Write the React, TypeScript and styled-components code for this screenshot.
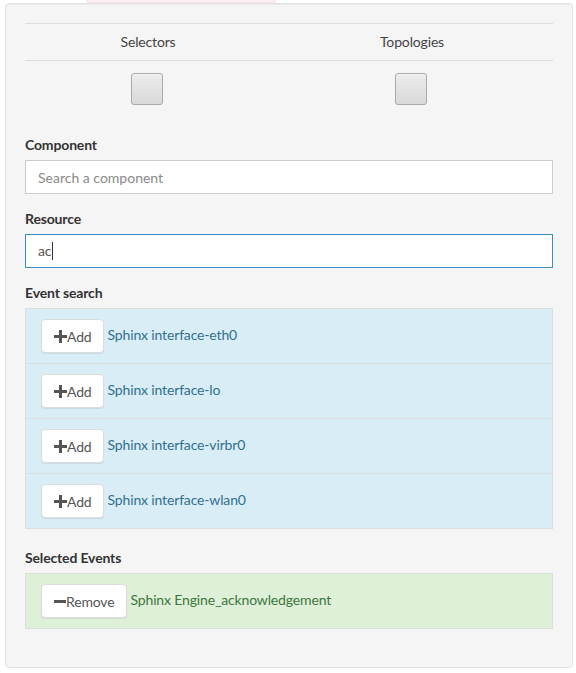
import React from "react";
import styled, { createGlobalStyle } from "styled-components";

const Global = createGlobalStyle`
  html, body { margin: 0; padding: 0; background: #fff; }
  body { font-family: Lato, "Liberation Sans", sans-serif; font-size: 14px; line-height: 20px; color: #333; letter-spacing: -0.15px; }
  * { box-sizing: border-box; }
`;

const Page = styled.div`
  width: 576px;
  padding: 0 3px 0 5px;
`;

const TopTab = styled.div`
  margin-left: 81px;
  width: 190px;
  height: 3px;
  background: #fbeef1;
  border: 1px solid #f6e2e7;
  border-top: none;
  border-radius: 0 0 6px 6px;
`;

const Well = styled.div`
  background: #f5f5f5;
  border: 1px solid #e3e3e3;
  border-radius: 4px;
  padding: 19px 19px 18px;
  box-shadow: inset 0 1px 1px rgba(0, 0, 0, 0.05);
`;

const Table = styled.div`
  display: grid;
  grid-template-columns: 246px 1fr;
  margin-bottom: 20px;
`;

const HeadCell = styled.div`
  border-top: 1px solid #ddd;
  border-bottom: 1px solid #ddd;
  padding: 8px;
  text-align: center;
  color: #444;
`;

const BodyCell = styled.div`
  padding: 12px 9px 10px 7px;
  display: flex;
  justify-content: center;
`;

const ToggleBox = styled.div`
  width: 32px;
  height: 32px;
  border: 1px solid #a9a9a9;
  border-radius: 3px;
  background: linear-gradient(#ececec, #d9d9d9);
  box-shadow: inset 0 1px 0 rgba(255, 255, 255, 0.6);
`;

const FormGroup = styled.div`
  margin-bottom: 15px;
`;

const Label = styled.div`
  font-weight: 700;
  margin-bottom: 5px;
  color: #333;
`;

const Input = styled.input`
  display: block;
  width: 100%;
  height: 34px;
  padding: 6px 12px;
  border: 1px solid #ccc;
  border-radius: 0;
  background: #fff;
  font: inherit;
  color: #555;
  outline: none;
  &::placeholder { color: #8a8a8a; }
`;

const FakeInput = styled.div`
  display: flex;
  align-items: center;
  width: 100%;
  height: 34px;
  padding: 6px 12px;
  border: 1px solid #3a8dc4;
  background: #fff;
  color: #555;
`;

const Caret = styled.span`
  display: inline-block;
  width: 1px;
  height: 18px;
  background: #333;
  margin-left: 1px;
`;

const Section = styled.div``;

const List = styled.div<{ $mb: number }>`
  margin-bottom: ${(p) => p.$mb}px;
`;

const Item = styled.div<{ $tone: "info" | "success" }>`
  display: flex;
  align-items: center;
  gap: 4px;
  padding: 10px 15px;
  border: 1px solid #ddd;
  margin-bottom: -1px;
  background: ${(p) => (p.$tone === "info" ? "#d9edf7" : "#dff0d8")};
  color: ${(p) => (p.$tone === "info" ? "#31708f" : "#3c763d")};
  &:last-child { margin-bottom: 0; }
`;

const Btn = styled.button`
  display: inline-flex;
  align-items: center;
  height: 34px;
  padding: 6px 11px 6px 12px;
  border: 1px solid #dcdcdc;
  border-radius: 4px;
  background: #fff;
  color: #555;
  font: inherit;
  letter-spacing: inherit;
  box-shadow: 0 1px 1px rgba(0, 0, 0, 0.08);
  cursor: pointer;
`;

const BtnText = styled.span`
  padding-top: 2px;
`;

const ItemText = styled.span`
  margin-top: -3px;
`;

const Plus = () => (
  <svg width="13" height="13" viewBox="0 0 13 13" style={{ marginTop: 1 }}>
    <path d="M5 0h3v5h5v3H8v5H5V8H0V5h5z" fill="#555" />
  </svg>
);

const Minus = () => (
  <svg width="12" height="13" viewBox="0 0 12 13" style={{ marginTop: 1 }}>
    <rect x="0" y="5" width="12" height="3" fill="#555" />
  </svg>
);

const events = [
  "Sphinx interface-eth0",
  "Sphinx interface-lo",
  "Sphinx interface-virbr0",
  "Sphinx interface-wlan0",
];

export default function App() {
  return (
    <Page>
      <Global />
      <TopTab />
      <Well>
        <Table>
          <HeadCell>Selectors</HeadCell>
          <HeadCell>Topologies</HeadCell>
          <BodyCell>
            <ToggleBox />
          </BodyCell>
          <BodyCell>
            <ToggleBox />
          </BodyCell>
        </Table>

        <FormGroup>
          <Label>Component</Label>
          <Input placeholder="Search a component" />
        </FormGroup>

        <FormGroup>
          <Label>Resource</Label>
          <FakeInput>
            ac
            <Caret />
          </FakeInput>
        </FormGroup>

        <Section>
          <Label>Event search</Label>
          <List $mb={19}>
            {events.map((e) => (
              <Item key={e} $tone="info">
                <Btn>
                  <Plus />
                  <BtnText>Add</BtnText>
                </Btn>
                <ItemText>{e}</ItemText>
              </Item>
            ))}
          </List>
        </Section>

        <Section>
          <Label>Selected Events</Label>
          <List $mb={20}>
            <Item $tone="success">
              <Btn>
                <Minus />
                <BtnText>Remove</BtnText>
              </Btn>
              <ItemText>Sphinx Engine_acknowledgement</ItemText>
            </Item>
          </List>
        </Section>
      </Well>
    </Page>
  );
}
